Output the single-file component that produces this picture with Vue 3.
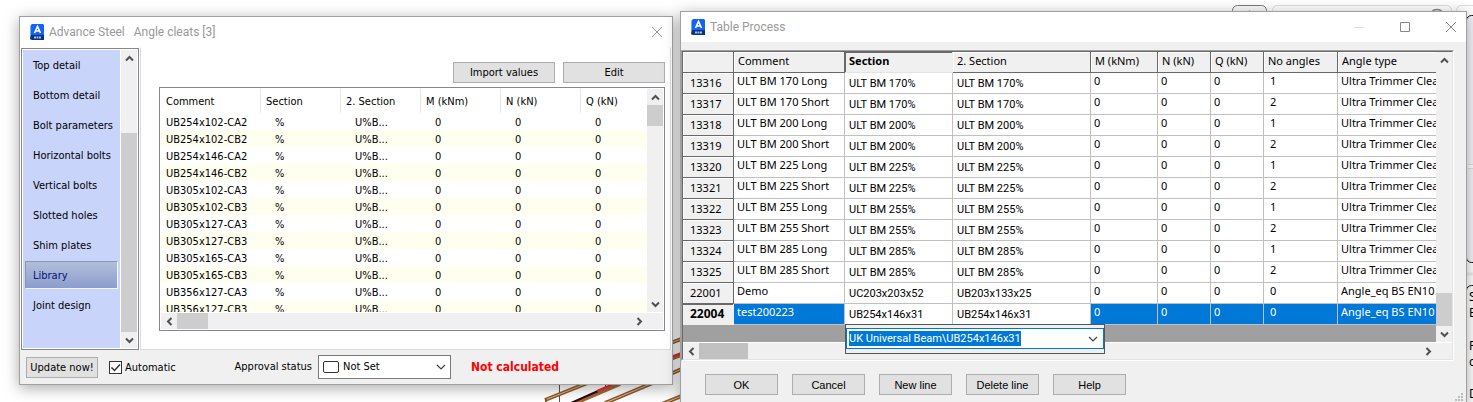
<script setup>
import { onMounted, ref } from 'vue'

const navItems = ['Top detail', 'Bottom detail', 'Bolt parameters', 'Horizontal bolts', 'Vertical bolts', 'Slotted holes', 'Shim plates', 'Library', 'Joint design']
const activeNav = ref('Library')
const automatic = ref(true)

const libraryColumns = ['Comment', 'Section', '2. Section', 'M (kNm)', 'N (kN)', 'Q (kN)']
const libraryRows = [
  '254x102-CA2', '254x102-CB2', '254x146-CA2', '254x146-CB2', '305x102-CA3', '305x102-CB3',
  '305x127-CA3', '305x127-CB3', '305x165-CA3', '305x165-CB3', '356x127-CA3', '356x127-CB3'
].map((name) => ['UB' + name, '%', 'U%B...', '0', '0', '0'])

const processColumns = ['Comment', 'Section', '2. Section', 'M (kNm)', 'N (kN)', 'Q (kN)', 'No angles', 'Angle type']
const trimmers = [170, 200, 225, 255, 285].flatMap((depth, i) => [
  { id: 13316 + i * 2, cells: [`ULT BM ${depth} Long`, `ULT BM ${depth}%`, `ULT BM ${depth}%`, '0', '0', '0', '1', 'Ultra Trimmer Cleat'] },
  { id: 13317 + i * 2, cells: [`ULT BM ${depth} Short`, `ULT BM ${depth}%`, `ULT BM ${depth}%`, '0', '0', '0', '2', 'Ultra Trimmer Cleat'] }
])
const processRows = [
  ...trimmers,
  { id: 22001, cells: ['Demo', 'UC203x203x52', 'UB203x133x25', '0', '0', '0', '0', 'Angle_eq BS EN10'] },
  { id: 22004, current: true, cells: ['test200223', 'UB254x146x31', 'UB254x146x31', '0', '0', '0', '0', 'Angle_eq BS EN10'] }
]
const actions = ['OK', 'Cancel', 'New line', 'Delete line', 'Help']

const sectionPath = ref('UK Universal Beam\\UB254x146x31')
const sectionInput = ref(null)
onMounted(() => {
  const input = [sectionInput.value].flat()[0]
  if (input) {
    input.focus()
    input.select()
  }
})
</script>

<template>
  <main class="desktop">
    <svg class="model" width="700" height="402" viewBox="0 0 700 402" aria-hidden="true">
      <g fill="none">
        <path d="M559.500 380V402M605.500 380V387" stroke="#555" />
        <g stroke="#8a5a2c" stroke-width="4">
          <path d="M545 400L590 382M605 403L655 382M662 404L684 395M668 344L684 338M668 375L684 368" />
        </g>
        <g stroke="#e0b98c" stroke-width="1">
          <path d="M545 400L590 382M605 403L655 382M662 404L684 395M668 344L684 338M668 375L684 368" />
        </g>
        <path d="M546 399V403" stroke="#8a5a2c" stroke-width="2" />
        <path d="M573 404L620 384M668 360L684 354" stroke="#a0673c" stroke-width="4" />
        <path d="M571 403L598 391" stroke="#2a0508" stroke-width="2" />
        <path d="M597 391L618 382M668 358L684 352" stroke="#e8262c" stroke-width="2" />
      </g>
    </svg>
    <svg class="ribbon" width="250" height="402" viewBox="0 0 250 402" aria-hidden="true">
      <g fill="none">
        <rect x="49.500" y="5.500" width="179" height="30" rx="5" stroke="#ddd" />
        <rect x="233.500" y="5.500" width="40" height="30" rx="5" stroke="#ddd" />
        <rect x="9.500" y="5.500" width="34" height="30" rx="5" fill="#fafafa" stroke="#777" />
        <path d="M22 15L26.500 10L31 15Z" fill="#aaa" />
        <circle cx="214" cy="17" r="7.500" stroke="#888" stroke-width="1.500" />
      </g>
      <rect x="243.500" y="15.500" width="30" height="247" rx="5" fill="#f4f4fa" stroke="#111" />
      <path d="M245 166H250" stroke="#fff" stroke-width="4" />
      <path d="M245 164.500H250M245 168.500H250" stroke="#ddd" />
      <path d="M244 274H250" stroke="#eee" stroke-width="3" />
      <rect x="243.500" y="285.500" width="30" height="130" rx="5" fill="#fff" stroke="#111" />
      <g class="ribbon-text">
        <text x="246" y="301">S</text>
        <text x="246" y="317">E</text>
        <text x="246" y="350">P</text>
        <text x="246" y="366">c</text>
        <text x="246" y="398">D</text>
      </g>
    </svg>

    <section class="window steel" aria-label="Advance Steel">
      <header class="title-bar">
        <svg class="app-icon" width="16" height="17" viewBox="0 0 16 17" aria-hidden="true">
          <path d="M1 2L4 0V14L1 16Z" fill="#78a8f4" />
          <path d="M3 0H14L15 1V12H2V1Z" fill="#1464f4" />
          <path d="M2 11H15V16H3L1 15Z" fill="#0b347f" />
          <path d="M5.500 9L8.500 2.500L11.500 9M6.500 7H10.500" fill="none" stroke="#fff" stroke-width="1.600" />
          <path d="M5 13.500H12" stroke="#a9bfe6" stroke-width="2" stroke-dasharray="2 .5" />
        </svg>
        <h1 class="title">Advance Steel&nbsp;&nbsp; Angle cleats [3]</h1>
        <button class="caption" type="button" aria-label="Close">
          <svg width="12" height="12" viewBox="0 0 12 12"><path d="M1 1L11 11M11 1L1 11" stroke="#999" /></svg>
        </button>
      </header>

      <div class="steel-body">
        <nav class="side">
          <ul class="side-list">
            <li v-for="item in navItems" :key="item">
              <button class="side-item" :class="{ active: item === activeNav }" type="button" @click="activeNav = item">{{ item }}</button>
            </li>
          </ul>
          <div class="scroll vertical">
            <button class="arrow" type="button" aria-label="Scroll up"><svg width="9" height="7" viewBox="0 0 9 7"><path d="M1 5.500L4.500 2L8 5.500" /></svg></button>
            <div class="track"><div class="thumb side-thumb"></div></div>
            <button class="arrow" type="button" aria-label="Scroll down"><svg width="9" height="7" viewBox="0 0 9 7"><path d="M1 1.500L4.500 5L8 1.500" /></svg></button>
          </div>
        </nav>

        <div class="panel">
          <div class="panel-actions">
            <button class="push" type="button">Import values</button>
            <button class="push" type="button">Edit</button>
          </div>
          <div class="library">
            <div class="library-main">
              <div class="library-view">
                <table class="library-table">
                  <thead>
                    <tr><th v-for="c in libraryColumns" :key="c" scope="col">{{ c }}</th></tr>
                  </thead>
                  <tbody>
                    <tr v-for="row in libraryRows" :key="row[0]">
                      <td v-for="(cell, i) in row" :key="i">{{ cell }}</td>
                    </tr>
                  </tbody>
                </table>
              </div>
              <div class="scroll vertical">
                <button class="arrow" type="button" aria-label="Scroll up"><svg width="9" height="7" viewBox="0 0 9 7"><path d="M1 5.500L4.500 2L8 5.500" /></svg></button>
                <div class="track"><div class="thumb library-thumb"></div></div>
                <button class="arrow" type="button" aria-label="Scroll down"><svg width="9" height="7" viewBox="0 0 9 7"><path d="M1 1.500L4.500 5L8 1.500" /></svg></button>
              </div>
            </div>
            <div class="scroll horizontal">
              <button class="arrow" type="button" aria-label="Scroll left"><svg width="7" height="9" viewBox="0 0 7 9"><path d="M5.500 1L2 4.500L5.500 8" /></svg></button>
              <div class="track"><div class="thumb library-hthumb"></div></div>
              <button class="arrow" type="button" aria-label="Scroll right"><svg width="7" height="9" viewBox="0 0 7 9"><path d="M1.500 1L5 4.500L1.500 8" /></svg></button>
            </div>
          </div>
        </div>
      </div>

      <footer class="steel-footer">
        <button class="push update" type="button">Update now!</button>
        <label class="auto">
          <input v-model="automatic" class="check" type="checkbox" />
          <svg class="tick" width="13" height="13" viewBox="0 0 13 13" aria-hidden="true"><path v-if="automatic" d="M2.500 6.500L5.500 9.500L11 3.500" /></svg>
          <span>Automatic</span>
        </label>
        <label class="status-label" for="approval">Approval status</label>
        <span class="combo">
          <span class="swatch"></span>
          <select id="approval" class="status-select"><option>Not Set</option></select>
          <svg class="chevron" width="10" height="6" viewBox="0 0 10 6" aria-hidden="true"><path d="M1 1L5 5L9 1" /></svg>
        </span>
        <strong class="result">Not calculated</strong>
      </footer>
    </section>

    <section class="window process" aria-label="Table Process">
      <header class="title-bar">
        <svg class="app-icon" width="16" height="17" viewBox="0 0 16 17" aria-hidden="true">
          <path d="M1 2L4 0V14L1 16Z" fill="#78a8f4" />
          <path d="M3 0H14L15 1V12H2V1Z" fill="#1464f4" />
          <path d="M2 11H15V16H3L1 15Z" fill="#0b347f" />
          <path d="M5.500 9L8.500 2.500L11.500 9M6.500 7H10.500" fill="none" stroke="#fff" stroke-width="1.600" />
          <path d="M5 13.500H12" stroke="#a9bfe6" stroke-width="2" stroke-dasharray="2 .5" />
        </svg>
        <h1 class="title">Table Process</h1>
        <button class="caption" type="button" aria-label="Minimize" disabled>
          <svg width="12" height="12" viewBox="0 0 12 12"><path d="M1 6.500H11" stroke="#ddd" /></svg>
        </button>
        <button class="caption" type="button" aria-label="Maximize">
          <svg width="12" height="12" viewBox="0 0 12 12"><path d="M1.500 1.500H10.500V10.500H1.500Z" fill="none" stroke="#888" /></svg>
        </button>
        <button class="caption" type="button" aria-label="Close">
          <svg width="12" height="12" viewBox="0 0 12 12"><path d="M1 1L11 11M11 1L1 11" stroke="#888" /></svg>
        </button>
      </header>

      <div class="process-body">
        <div class="sheet-frame">
          <div class="sheet">
            <div class="sheet-main">
              <div class="sheet-view">
                <table class="sheet-table">
                  <colgroup>
                    <col class="w-id" /><col class="w-comment" /><col class="w-section" /><col class="w-second" /><col class="w-m" /><col class="w-n" /><col class="w-n" /><col class="w-count" /><col />
                  </colgroup>
                  <thead>
                    <tr>
                      <th class="corner"></th>
                      <th v-for="c in processColumns" :key="c" scope="col" :class="{ current: c === 'Section' }">{{ c }}</th>
                    </tr>
                  </thead>
                  <tbody>
                    <tr v-for="row in processRows" :key="row.id" :class="{ current: row.current }">
                      <th scope="row">{{ row.id }}</th>
                      <td v-for="(cell, i) in row.cells" :key="i" :class="{ combo: i === 1 || i === 2 }">
                        {{ cell }}
                        <div v-if="row.current && i === 1" class="picker">
                          <div class="picker-box">
                            <input ref="sectionInput" v-model="sectionPath" class="picker-input" type="text" aria-label="Section" />
                            <svg class="chevron" width="10" height="6" viewBox="0 0 10 6" aria-hidden="true"><path d="M1 1L5 5L9 1" /></svg>
                          </div>
                        </div>
                      </td>
                    </tr>
                  </tbody>
                </table>
              </div>
              <div class="scroll vertical">
                <button class="arrow" type="button" aria-label="Scroll up"><svg width="9" height="7" viewBox="0 0 9 7"><path d="M1 5.500L4.500 2L8 5.500" /></svg></button>
                <div class="track end"><div class="thumb sheet-thumb"></div></div>
                <button class="arrow" type="button" aria-label="Scroll down"><svg width="9" height="7" viewBox="0 0 9 7"><path d="M1 1.500L4.500 5L8 1.500" /></svg></button>
              </div>
            </div>
            <div class="scroll horizontal">
              <button class="arrow" type="button" aria-label="Scroll left"><svg width="7" height="9" viewBox="0 0 7 9"><path d="M5.500 1L2 4.500L5.500 8" /></svg></button>
              <div class="track"><div class="thumb sheet-hthumb"></div></div>
              <button class="arrow" type="button" aria-label="Scroll right"><svg width="7" height="9" viewBox="0 0 7 9"><path d="M1.500 1L5 4.500L1.500 8" /></svg></button>
            </div>
          </div>
        </div>
        <div class="process-actions">
          <button v-for="a in actions" :key="a" class="push" type="button">{{ a }}</button>
          <svg class="grip" width="9" height="9" viewBox="0 0 9 9" aria-hidden="true">
            <path d="M6 0H8V2H6ZM3 3H5V5H3ZM6 3H8V5H6ZM0 6H2V8H0ZM3 6H5V8H3ZM6 6H8V8H6Z" fill="#bbb" />
          </svg>
        </div>
      </div>
    </section>
  </main>
</template>

<style>
body { margin: 0; background: #fff; }
</style>

<style scoped>
* { box-sizing: border-box; }
button { font: inherit; color: inherit; border: 0; padding: 0; background: none; border-radius: 0; }
.desktop {
  position: relative;
  display: grid;
  grid-template-columns: 654fr 787fr;
  column-gap: 7px;
  align-items: start;
  padding: 11px 6px 0 19px;
  height: 100vh;
  overflow: hidden;
  background: #fff;
  color: #000;
  font: 11px/16px "DejaVu Sans Condensed", "DejaVu Sans", sans-serif;
}
.model, .ribbon { position: absolute; top: 0; }
.model { left: 0; }
.ribbon { right: 0; }
.ribbon-text { font: 12px "Noto Sans", sans-serif; }
.window {
  position: relative;
  min-width: 0;
  border: 1px solid #a0a0a0;
  background: #f0f0f0;
  box-shadow: 0 3px 14px rgba(0, 0, 0, 0.34);
}
.steel { margin-top: 5px; }
.title-bar { display: flex; align-items: center; height: 30px; padding: 0 9px; background: #fff; }
.title { flex: 1; margin: 0 0 0 4px; color: #999; font: 12px/16px Roboto, "Noto Sans", sans-serif; }
.caption { display: flex; align-items: center; justify-content: center; width: 12px; height: 12px; margin-left: 34px; }

.steel-body { display: flex; background: #fff; }
.side { display: flex; flex: none; width: 118px; height: 302px; margin: 1px 1px 0 1px; padding: 1px; border: 1px solid #828790; }
.side-list { flex: 1; min-width: 0; margin: 0 1px 0 0; padding: 1px 2px; list-style: none; background: #c8d4fa; }
.side-item { display: block; width: 100%; height: 28px; margin-bottom: 2px; padding: 2px 0 0 7px; border: 1px solid transparent; text-align: left; white-space: nowrap; }
.side-item.active { border-color: #8a96b4 #f4f6ff #f4f6ff #8a96b4; background: linear-gradient(#b1bedb, #8b9dcd); color: #0a1478; }

.scroll { display: flex; background: #f0f0f0; }
.vertical { flex-direction: column; width: 16px; flex: none; }
.horizontal { height: 16px; padding-right: 16px; }
.arrow { display: flex; flex: none; align-items: center; justify-content: center; width: 16px; height: 16px; }
.arrow path { fill: none; stroke: #505050; stroke-width: 2; }
.track { flex: 1; display: flex; }
.vertical .track { flex-direction: column; }
.track.end { justify-content: flex-end; }
.thumb { background: #cdcdcd; }
.side-thumb { flex: 1; margin-top: 67px; }
.library-thumb { height: 21px; }
.library-hthumb { width: 31px; }
.sheet-thumb { height: 33px; }
.sheet-hthumb { width: 49px; background: #c1c1c1; }

.panel { flex: 1; min-width: 0; padding: 14px 5px 18px 18px; border: 1px solid #dcdcdc; border-top-color: #fff; margin-right: 1px; }
.panel-actions { display: flex; justify-content: flex-end; gap: 8px; margin-bottom: 4px; }
.push { border: 1px solid #adadad; background: #e1e1e1; text-align: center; white-space: nowrap; }
.panel-actions .push { width: 102px; height: 21px; padding-top: 1px; line-height: 16px; }
.library { padding: 1px; border: 1px solid #828790; background: #fff; }
.library-main { display: flex; margin-bottom: 1px; }
.library-view { flex: 1; min-width: 0; height: 223px; overflow: hidden; }
.library-table { width: 100%; table-layout: fixed; border-spacing: 0; }
.library-table th { width: 80px; height: 24px; padding: 2px 0 0 5px; border-left: 1px solid #e5e5e5; font-weight: normal; text-align: left; white-space: nowrap; }
.library-table th:first-child { width: 99px; border-left: 0; }
.library-table th:last-child { width: auto; }
.library-table td { height: 17px; padding: 2px 0 0 15px; line-height: 15px; white-space: nowrap; }
.library-table td:first-child { padding-left: 5px; }
.library-table tbody tr:nth-child(even) { background: #fffff0; }

.steel-footer { display: flex; align-items: center; height: 34px; padding: 0 6px; white-space: nowrap; }
.update { width: 72px; height: 21px; padding-top: 1px; line-height: 16px; }
.auto { position: relative; display: flex; align-items: center; margin-left: 11px; gap: 3px; padding-top: 1px; }
.check { appearance: none; width: 13px; height: 13px; margin: 0; border: 1px solid #333; background: #fff; }
.tick { position: absolute; left: 0; top: 50%; margin-top: -6px; pointer-events: none; }
.tick path { fill: none; stroke: #333; stroke-width: 1.5; }
.status-label { margin-left: auto; }
.combo { position: relative; }
.steel-footer .combo { display: flex; flex: none; width: 133px; height: 24px; margin: 0 20px 0 6px; }
.status-select { appearance: none; width: 100%; height: 100%; padding: 0 20px 0 24px; border: 1px solid #7a7a7a; border-radius: 0; background: #fff; color: #000; font: inherit; }
.swatch { position: absolute; left: 5px; top: 6px; width: 16px; height: 12px; border: 1px solid #333; border-radius: 2px; background: #fff; }
.chevron { position: absolute; right: 5px; top: 50%; margin-top: -3px; pointer-events: none; }
.chevron path { fill: none; stroke: #444; stroke-width: 1.2; }
.result { width: 195px; color: #f00; font: bold 12px/16px "DejaVu Sans Condensed", "DejaVu Sans", sans-serif; }

.process { height: 393px; font: 11px/16px "Noto Sans", "Open Sans", sans-serif; }
.process-body { padding-top: 8px; }
.sheet-frame { margin-right: 12px; border: 1px solid; border-color: #a0a0a0 #fff #fff #a0a0a0; }
.sheet { border: 1px solid; border-color: #696969 #e3e3e3 #e3e3e3 #696969; }
.sheet-main { display: flex; border-bottom: 1px solid #fff; }
.sheet-view { flex: 1; min-width: 0; height: 290px; background: #a0a0a0; }
.sheet-table { width: 100%; table-layout: fixed; border-spacing: 0; }
.w-id { width: 51px; }
.w-comment { width: 111px; }
.w-section { width: 108px; }
.w-second { width: 138px; }
.w-m { width: 67px; }
.w-n { width: 53px; }
.w-count { width: 74px; }
.sheet-table th, .sheet-table td { height: 21px; padding: 0 0 4px 3px; border-right: 1px solid #c0c0c0; border-bottom: 1px solid #c0c0c0; background: #fff; line-height: 16px; text-align: left; white-space: nowrap; }
.sheet-table td.combo { padding: 1px 0 0 4px; line-height: 19px; font-family: Roboto, sans-serif; }
.sheet-table td:nth-child(8) { padding-left: 6px; }
.sheet-table td:last-child, .sheet-table th:last-child { overflow: hidden; border-right: 0; }
.sheet-table th { padding: 0 0 2px 4px; border-color: #696969; background: #f0f0f0; box-shadow: inset 1px 1px #fff; font-weight: normal; }
.sheet-table tbody th { padding: 0 0 1px 7px; }
.sheet-table thead .current { border-right-color: #f0f0f0; border-bottom-color: #e3e3e3; box-shadow: inset 1px 1px #696969; font-weight: bold; }
.sheet-table .current th { border-color: #f0f0f0; box-shadow: inset 0 1px #696969; font-size: 12px; font-weight: bold; }
.sheet-table .current td { background: #0078d7; color: #fff; }
.sheet-table .current td.combo { background: #fff; color: #000; }
.picker { position: absolute; z-index: 2; top: 100%; left: 0; width: 260px; padding: 3px 0 4px; border: 1px solid #555; background: #f0f0f0; }
.picker-box { position: relative; padding: 2px; border: 1px solid #0078d7; background: #fff; }
.picker-input { display: block; width: 100%; height: 15px; margin: 0; padding: 0 20px 0 0; border: 0; outline: 0; background: #fff; color: #000; font: 11px/15px Roboto, sans-serif; }
.picker-input::selection { background: #0078d7; color: #fff; }

.process-actions { position: relative; display: flex; gap: 14px; padding: 13px 0 7px 24px; }
.process-actions .push { width: 73px; height: 21px; font: 11px/18px "Liberation Sans", Arial, sans-serif; }
.grip { position: absolute; right: 2px; bottom: 0; }
</style>
